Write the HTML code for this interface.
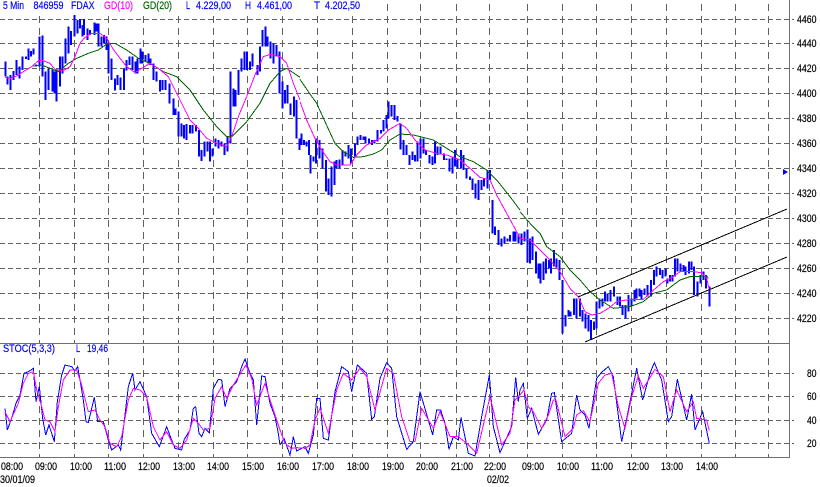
<!DOCTYPE html>
<html>
<head>
<meta charset="utf-8">
<style>
html,body{margin:0;padding:0;background:#fff;width:820px;height:487px;overflow:hidden}
svg{display:block}
svg *{vector-effect:non-scaling-stroke}
.l{fill:none;stroke-width:1;shape-rendering:crispEdges}
.b{fill:none;stroke:#0000ff;stroke-width:2;shape-rendering:crispEdges}
text{font-family:"Liberation Sans",sans-serif;font-size:11px;stroke-width:.2}
</style>
</head>
<body>
<svg width="820" height="487" viewBox="0 0 820 487" xmlns="http://www.w3.org/2000/svg">
<!-- grid -->
<path class="l" stroke="#606060" stroke-dasharray="5 3" d="M0 19.5H794M0 43.5H794M0 68.5H794M0 93.5H794M0 118.5H794M0 143.5H794M0 168.5H794M0 193.5H794M0 218.5H794M0 243.5H794M0 268.5H794M0 293.5H794M0 318.5H794M0 373.5H794M0 396.5H794M0 420.5H794M0 443.5H794"/>
<path class="l" stroke="#606060" stroke-dasharray="7 5" d="M39.5 4V343M74.5 4V343M108.5 4V343M143.5 4V343M178.5 4V343M213.5 4V343M247.5 4V343M282.5 4V343M317.5 4V343M352.5 4V343M387.5 4V343M420.5 4V343M456.5 4V343M489.5 4V343M527.5 4V343M562.5 4V343M596.5 4V343M631.5 4V343M666.5 4V343M701.5 4V343M735.5 4V343M768.5 4V343M39.5 346V457M74.5 346V457M108.5 346V457M143.5 346V457M178.5 346V457M213.5 346V457M247.5 346V457M282.5 346V457M317.5 346V457M352.5 346V457M387.5 346V457M420.5 346V457M456.5 346V457M489.5 346V457M527.5 346V457M562.5 346V457M596.5 346V457M631.5 346V457M666.5 346V457M701.5 346V457M735.5 346V457M768.5 346V457"/>
<rect x="0" y="0" width="366" height="14" fill="#fff"/>
<rect x="0" y="345" width="112" height="11" fill="#fff"/>
<path class="l" stroke="#707070" d="M789.5 0V458M0 343.5H790M0 457.5H790"/>

<!-- price bars -->
<g transform="translate(0,15) scale(.33333)">
<path class="b" d="M17 140V185M23 185V208M31 180V225M41 168V195M50 135V180M58 155V190M68 125V165M78 125V132M86 100V135M93 108V125M100 100V118M108 148V155M119 65V155M128 62V185M137 170V255M146 160V225M157 165V230M163 170V235M170 165V260M180 125V215M188 125V175M196 70V145M205 35V115M213 48V90M223 0V65M232 15V55M240 12V40M247 30V65M252 12V60M262 40V75M270 45V60M283 22V60M290 25V50"/>
</g>
<g transform="scale(.33333)">
<path class="b" d="M295 70V140M305 110V140M312 105V130M320 110V150M326 130V220M335 175V240M345 235V272M353 225V255M362 232V270M372 205V270M380 180V212M388 170V195M398 170V210M406 185V220M413 175V220M421 145V190M428 155V190M437 165V185M445 160V190M452 175V195M460 190V240M470 215V245M480 240V275M487 240V270M497 240V270M508 250V310M520 295V345M527 325V345M536 335V410M545 370V410M552 375V415M560 372V420M570 375V400M578 375V400M588 375V395M597 390V470M605 450V483M613 425V470M622 425V455M630 425V485M638 445V470M647 415V440M655 420V445M665 425V440M673 430V465M682 410V455M692 215V430M700 265V320M707 270V320M716 210V285M724 175V215M733 155V210M741 155V210M750 185V210M757 160V200M772 195V225M780 140V215M787 90V140M796 80V140M803 110V140M812 125V175M820 130V190M830 135V170M838 155V280M848 245V325M855 270V310M862 255V310M872 310V345M882 290V350M890 300V415M898 415V450"/>
</g>
<g transform="translate(300,90) scale(.33333)">
<path class="b" d="M5 130V165M12 150V165M20 155V170M27 150V195M32 195V250M40 200V215M48 145V220M58 150V205M68 175V235M78 210V305M85 265V315M95 230V320M103 215V285M110 210V235M118 208V235M128 180V225M137 185V200M145 165V205M153 175V220M165 160V200M173 140V165M181 135V150M190 140V150M197 140V160M207 145V160M216 150V165M224 150V160M233 120V155M243 120V130M251 90V125M260 75V115M266 35V85M275 45V80M284 45V90M293 78V95M302 100V178M310 150V195M320 165V195M328 195V225M338 185V210M345 195V215M353 155V215M361 145V205M370 145V190M378 180V195M388 195V220M397 200V225M405 155V220M413 170V195M422 170V190M432 190V210M440 205V210M448 205V245M457 200V250M465 180V230M473 205V235M483 180V235M490 195V240M500 235V265M510 260V270M518 265V300M527 280V325M535 270V330M545 270V300M552 265V290M562 240V295M570 240V270"/>
</g>
<g transform="translate(480,170) scale(.33333)">
<path class="b" d="M38 90V190M45 170V195M55 180V225M65 205V230M74 200V220M82 205V215M90 195V215M100 185V215M107 185V215M115 190V220M125 190V225M133 185V215M142 178V278M150 205V280M158 200V270M168 245V310M175 280V325M182 280V340M190 275V330M198 265V310M207 270V295M213 265V310M222 240V290M230 265V295M238 270V330"/>
</g>
<g transform="translate(520,200) scale(.33333)">
<path class="b" d="M128 240V400M137 345V380M145 330V350M152 335V350M162 295V345M170 295V355M180 295V350M188 330V365M197 340V385M205 345V395M213 360V420M222 365V390M230 305V385M238 295V325M247 295V320M255 275V305M262 280V305M272 270V305M282 260V290M292 290V315M300 290V320M308 315V345M317 315V355M325 285V335M335 295V320M343 270V305M350 265V295M358 265V290M365 270V300M373 265V285M382 255V290M393 240V290M402 210V255M410 200V230M420 205V225M428 210V235M437 205V230M443 235V250M450 225V245M457 225V245M465 175V230M472 175V215M482 190V215M490 195V215M497 200V225M507 185V220M515 185V210M522 200V285M532 245V290M542 225V250M550 215V240M558 225V265M568 260V320"/>
</g>

<!-- green MA20 -->
<polyline class="l" stroke="#006400" transform="scale(.33333)" points="100,198 125,195 150,205 175,215 205,190 230,175 265,160 295,150 320,132 345,130 380,150 420,178 450,190 490,215 530,230 570,270 610,330 650,380 680,410 695,410 740,365 780,310 810,250 840,215 860,205 900,232"/>
<polyline class="l" stroke="#006400" transform="translate(300,90) scale(.33333)" points="0,-32 25,5 50,40 75,95 105,160 130,185 160,202 190,200 220,192 245,180 270,150 300,132 340,135 400,150 440,175 480,200 520,215 560,240 590,270 630,320 660,360"/>
<polyline class="l" stroke="#006400" transform="translate(520,200) scale(.33333)" points="0,35 30,70 60,100 80,140 120,170 150,210 180,240 210,275 240,300 280,325 330,320 370,305 400,280 440,270 480,240 510,230 560,228 565,235"/>

<!-- magenta MA10 -->
<polyline class="l" stroke="#ff00ff" transform="scale(.33333)" points="15,232 30,235 50,228 70,215 95,200 115,182 130,182 150,190 165,208 190,212 210,200 225,170 240,130 255,112 275,100 300,100 320,115 340,148 360,175 380,200 405,218 425,205 450,190 475,205 505,230 525,270 550,320 570,360 595,385 620,415 650,430 680,440 695,410 715,350 740,290 765,225 790,170 810,163 840,170 860,190 880,250 900,300"/>
<polyline class="l" stroke="#ff00ff" transform="translate(300,90) scale(.33333)" points="0,35 20,90 45,145 65,180 90,215 110,225 150,225 170,195 200,165 240,145 265,120 300,100 320,115 345,150 375,180 410,190 440,195 480,210 510,235 540,262 570,270 590,315 620,370 650,425"/>
<polyline class="l" stroke="#ff00ff" transform="translate(520,200) scale(.33333)" points="-9,96 0,115 30,120 60,150 90,180 120,215 150,265 175,290 195,335 215,345 240,340 265,325 290,305 330,298 370,298 395,275 430,245 460,230 480,215 520,215 545,218 560,235 568,270"/>

<!-- channel lines -->
<path class="l" stroke="#000" d="M578 297L787 209M585 342L787 257"/>
<polygon points="783,169 788,172 783,175" fill="#0000ff"/>

<!-- stochastic blue -->
<polyline class="l" stroke="#0000ff" transform="translate(0,340) scale(.33333)" points="15,205 22,270 35,235 48,190 60,165 72,100 85,95 100,85 108,185 118,140 128,235 137,285 147,255 163,305 172,185 185,105 195,75 215,80 225,92 233,80 240,120 250,180 258,245 265,248 283,172 293,245 310,245 325,300 335,330 355,315 362,330 372,250 385,140 398,100 405,150 420,125 440,170 455,280 478,320 500,260 515,300 525,325 545,330 552,300 570,270 580,205 587,200 597,280 605,290 615,265 628,278 640,145 655,118 665,120 675,200 690,145 710,125 725,80 735,57 750,100 760,120 770,255 785,108 795,110 810,190 825,230 835,280 840,315"/>
<polyline class="l" stroke="#0000ff" transform="translate(280,340) scale(.33333)" points="0,315 12,295 30,345 40,290 50,333 75,320 85,340 100,285 110,175 120,175 130,295 145,300 165,155 185,80 205,95 215,155 232,75 260,100 275,238 283,230 300,115 320,68 335,85 350,230 380,328 400,305 420,155 445,240 458,285 470,210 482,210 495,250 507,328 520,290 535,300 543,232 565,340 585,348 605,230 628,105 640,260 660,338 695,260 707,112 715,185 720,150"/>
<polyline class="l" stroke="#0000ff" transform="translate(520,340) scale(.33333)" points="0,150 10,130 22,235 35,205 55,283 80,240 95,160 103,158 125,305 155,280 170,165 180,210 195,225 207,265 230,115 245,97 265,80 280,110 305,305 320,235 350,85 368,180 390,100 403,68 425,120 445,245 455,230 472,118 500,240 515,162 525,270 548,215 568,310"/>
<!-- stochastic magenta -->
<polyline class="l" stroke="#ff00ff" transform="translate(0,340) scale(.33333)" points="15,215 30,245 55,190 70,130 85,100 100,95 110,150 125,200 135,240 150,245 165,275 175,200 190,120 210,90 230,90 245,135 265,215 285,210 300,240 315,260 330,310 350,320 365,290 385,180 400,145 420,150 440,170 460,260 480,300 500,275 520,315 540,325 560,300 580,235 595,250 610,270 630,265 645,175 665,140 680,175 700,135 725,95 738,75 755,115 770,195 795,130 815,195 840,270"/>
<polyline class="l" stroke="#ff00ff" transform="translate(280,340) scale(.33333)" points="0,270 15,310 35,325 50,323 75,325 90,315 105,240 120,205 145,280 170,150 190,100 215,120 240,85 260,110 285,210 320,85 340,100 365,230 390,305 405,305 425,205 460,265 480,215 510,290 535,290 560,310 590,340 630,170 665,315 690,280 705,180 720,165"/>
<polyline class="l" stroke="#ff00ff" transform="translate(520,340) scale(.33333)" points="0,165 12,150 25,200 40,215 65,265 85,225 100,180 108,180 135,290 160,265 170,225 190,212 210,245 235,130 255,105 275,100 295,200 315,265 335,170 355,108 370,145 405,88 430,110 450,215 470,150 500,215 520,185 530,235 560,240 568,272"/>

<!-- header text -->
<g fill="#0000ff" stroke="#0000ff">
<text x="3" y="9" textLength="21" lengthAdjust="spacingAndGlyphs">5 Min</text>
<text x="33.5" y="9" textLength="30" lengthAdjust="spacingAndGlyphs">846959</text>
<text x="71" y="9" textLength="23.5" lengthAdjust="spacingAndGlyphs">FDAX</text>
<text x="186" y="9" textLength="4" lengthAdjust="spacingAndGlyphs">L</text>
<text x="196" y="9" textLength="35" lengthAdjust="spacingAndGlyphs">4.229,00</text>
<text x="245" y="9" textLength="6" lengthAdjust="spacingAndGlyphs">H</text>
<text x="257" y="9" textLength="35" lengthAdjust="spacingAndGlyphs">4.461,00</text>
<text x="314" y="9" textLength="6" lengthAdjust="spacingAndGlyphs">T</text>
<text x="325" y="9" textLength="35" lengthAdjust="spacingAndGlyphs">4.202,50</text>
<text x="3" y="352" textLength="52" lengthAdjust="spacingAndGlyphs">STOC(5,3,3)</text>
<text x="76" y="352" textLength="4" lengthAdjust="spacingAndGlyphs">L</text>
<text x="87" y="352" textLength="21" lengthAdjust="spacingAndGlyphs">19,46</text>
</g>
<text x="104" y="9" fill="#ff00ff" stroke="#ff00ff" textLength="29" lengthAdjust="spacingAndGlyphs">GD(10)</text>
<text x="143" y="9" fill="#006400" stroke="#006400" textLength="29" lengthAdjust="spacingAndGlyphs">GD(20)</text>

<!-- y axis labels -->
<g fill="#000" stroke="#000">
<text x="797" y="23" textLength="19.5" lengthAdjust="spacingAndGlyphs">4460</text>
<text x="797" y="47" textLength="19.5" lengthAdjust="spacingAndGlyphs">4440</text>
<text x="797" y="72" textLength="19.5" lengthAdjust="spacingAndGlyphs">4420</text>
<text x="797" y="97" textLength="19.5" lengthAdjust="spacingAndGlyphs">4400</text>
<text x="797" y="122" textLength="19.5" lengthAdjust="spacingAndGlyphs">4380</text>
<text x="797" y="147" textLength="19.5" lengthAdjust="spacingAndGlyphs">4360</text>
<text x="797" y="172" textLength="19.5" lengthAdjust="spacingAndGlyphs">4340</text>
<text x="797" y="197" textLength="19.5" lengthAdjust="spacingAndGlyphs">4320</text>
<text x="797" y="222" textLength="19.5" lengthAdjust="spacingAndGlyphs">4300</text>
<text x="797" y="247" textLength="19.5" lengthAdjust="spacingAndGlyphs">4280</text>
<text x="797" y="272" textLength="19.5" lengthAdjust="spacingAndGlyphs">4260</text>
<text x="797" y="297" textLength="19.5" lengthAdjust="spacingAndGlyphs">4240</text>
<text x="797" y="322" textLength="19.5" lengthAdjust="spacingAndGlyphs">4220</text>
<text x="807" y="377" textLength="9.5" lengthAdjust="spacingAndGlyphs">80</text>
<text x="807" y="400" textLength="9.5" lengthAdjust="spacingAndGlyphs">60</text>
<text x="807" y="424" textLength="9.5" lengthAdjust="spacingAndGlyphs">40</text>
<text x="807" y="447" textLength="9.5" lengthAdjust="spacingAndGlyphs">20</text>
<!-- time labels -->
<text x="1" y="470" textLength="22" lengthAdjust="spacingAndGlyphs">08:00</text>
<text x="35" y="470" textLength="22" lengthAdjust="spacingAndGlyphs">09:00</text>
<text x="70" y="470" textLength="22" lengthAdjust="spacingAndGlyphs">10:00</text>
<text x="104" y="470" textLength="22" lengthAdjust="spacingAndGlyphs">11:00</text>
<text x="138" y="470" textLength="22" lengthAdjust="spacingAndGlyphs">12:00</text>
<text x="173" y="470" textLength="22" lengthAdjust="spacingAndGlyphs">13:00</text>
<text x="207" y="470" textLength="22" lengthAdjust="spacingAndGlyphs">14:00</text>
<text x="242" y="470" textLength="22" lengthAdjust="spacingAndGlyphs">15:00</text>
<text x="277" y="470" textLength="22" lengthAdjust="spacingAndGlyphs">16:00</text>
<text x="312" y="470" textLength="22" lengthAdjust="spacingAndGlyphs">17:00</text>
<text x="347" y="470" textLength="22" lengthAdjust="spacingAndGlyphs">18:00</text>
<text x="382" y="470" textLength="22" lengthAdjust="spacingAndGlyphs">19:00</text>
<text x="416" y="470" textLength="22" lengthAdjust="spacingAndGlyphs">20:00</text>
<text x="451" y="470" textLength="22" lengthAdjust="spacingAndGlyphs">21:00</text>
<text x="484" y="470" textLength="22" lengthAdjust="spacingAndGlyphs">22:00</text>
<text x="522" y="470" textLength="22" lengthAdjust="spacingAndGlyphs">09:00</text>
<text x="557" y="470" textLength="22" lengthAdjust="spacingAndGlyphs">10:00</text>
<text x="591" y="470" textLength="22" lengthAdjust="spacingAndGlyphs">11:00</text>
<text x="627" y="470" textLength="22" lengthAdjust="spacingAndGlyphs">12:00</text>
<text x="661" y="470" textLength="22" lengthAdjust="spacingAndGlyphs">13:00</text>
<text x="696" y="470" textLength="22" lengthAdjust="spacingAndGlyphs">14:00</text>
<text x="0" y="483" textLength="35" lengthAdjust="spacingAndGlyphs">30/01/09</text>
<text x="487" y="483" textLength="22" lengthAdjust="spacingAndGlyphs">02/02</text>
</g>
</svg>
</body>
</html>
